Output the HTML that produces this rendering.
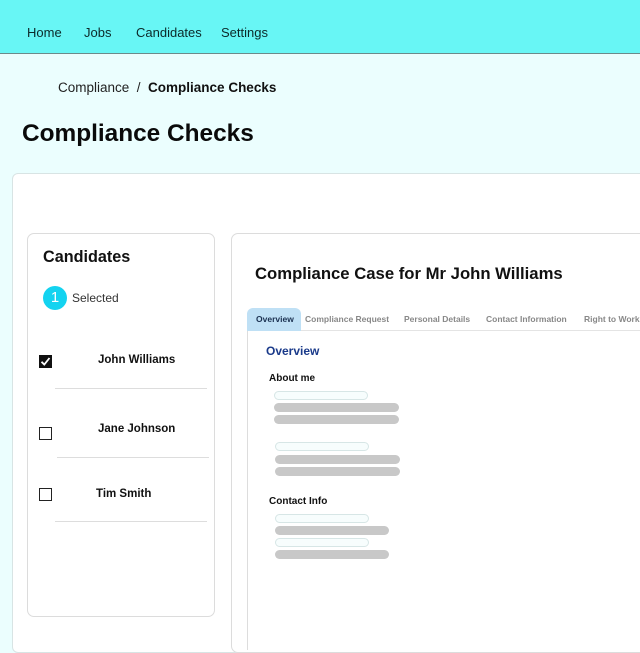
<!DOCTYPE html>
<html><head><style>
*{margin:0;padding:0;box-sizing:border-box}
body{width:640px;height:640px;overflow:hidden;background:#ebfefe;font-family:"Liberation Sans",sans-serif;position:relative;color:#111}
.a{position:absolute}
.hdr{left:0;top:0;width:640px;height:54px;background:#68f6f5;border-bottom:1px solid #6a8a8a}
.nav{top:25px;font-size:13px;color:#0c2a2a}
.card{left:12px;top:173px;width:640px;height:480px;background:#fff;border:1px solid #d8e4e4;border-radius:6px}
.lp{left:27px;top:233px;width:188px;height:384px;border:1px solid #dcdcdc;border-radius:7px;background:#fff}
.rp{left:231px;top:233px;width:420px;height:420px;border:1px solid #dcdcdc;border-radius:7px;background:#fff}
.cb{width:13px;height:13px;border:1.5px solid #222;background:#fff}
.nm{font-size:11.5px;font-weight:bold}
.hr{height:1px;background:#ddd}
.tab{top:314px;font-size:8.5px;font-weight:bold;color:#888}
.pill{height:9px;border:1px solid #d7e6e6;border-radius:5px;background:#f7fdfd}
.bar{height:9px;border-radius:5px;background:#c8c8c8}
</style></head><body>
<div class="a hdr"></div>
<div class="a nav" style="left:27px">Home</div>
<div class="a nav" style="left:84px">Jobs</div>
<div class="a nav" style="left:136px">Candidates</div>
<div class="a nav" style="left:221px">Settings</div>
<div class="a" style="left:58px;top:80px;font-size:13.5px;color:#222">Compliance &nbsp;/ &nbsp;<b style="color:#111">Compliance Checks</b></div>
<div class="a" style="left:22px;top:120px;font-size:24.4px;font-weight:bold;color:#0a0a0a">Compliance Checks</div>
<div class="a card"></div>
<div class="a lp"></div>
<div class="a" style="left:43px;top:248px;font-size:16.2px;font-weight:bold">Candidates</div>
<div class="a" style="left:43px;top:286px;width:24px;height:24px;border-radius:50%;background:#13d3f0;color:#fff;font-size:15px;text-align:center;line-height:24px">1</div>
<div class="a" style="left:72px;top:291px;font-size:12px;color:#333">Selected</div>
<div class="a" style="left:39px;top:355px;width:13px;height:13px;background:#111"><svg width="13" height="13" viewBox="0 0 13 13"><path d="M2.5 6.8 L5.3 9.5 L10.5 3" stroke="#fff" stroke-width="1.8" fill="none"/></svg></div>
<div class="a nm" style="left:98px;top:354px">John Williams</div>
<div class="a hr" style="left:55px;top:388px;width:152px"></div>
<div class="a cb" style="left:39px;top:427px"></div>
<div class="a nm" style="left:98px;top:423px">Jane Johnson</div>
<div class="a hr" style="left:57px;top:457px;width:152px"></div>
<div class="a cb" style="left:39px;top:488px"></div>
<div class="a nm" style="left:96px;top:488px">Tim Smith</div>
<div class="a hr" style="left:55px;top:521px;width:152px"></div>
<div class="a rp"></div>
<div class="a" style="left:255px;top:264px;font-size:16.7px;font-weight:bold">Compliance Case for Mr John Williams</div>
<div class="a" style="left:247px;top:330px;width:400px;height:320px;border-left:1px solid #ddd;border-top:1px solid #e4e4e4"></div>
<div class="a" style="left:247px;top:308px;width:54px;height:23px;background:#bfe0f5;border-radius:6px 6px 0 0"></div>
<div class="a tab" style="left:256px;color:#1a3050">Overview</div>
<div class="a tab" style="left:305px">Compliance Request</div>
<div class="a tab" style="left:404px">Personal Details</div>
<div class="a tab" style="left:486px">Contact Information</div>
<div class="a tab" style="left:584px">Right to Work</div>
<div class="a" style="left:266px;top:344px;font-size:12px;font-weight:bold;color:#1a3a8a">Overview</div>
<div class="a" style="left:269px;top:373px;font-size:10px;font-weight:bold">About me</div>
<div class="a pill" style="left:274px;top:391px;width:94px"></div>
<div class="a bar" style="left:274px;top:403px;width:125px"></div>
<div class="a bar" style="left:274px;top:415px;width:125px"></div>
<div class="a pill" style="left:275px;top:442px;width:94px"></div>
<div class="a bar" style="left:275px;top:455px;width:125px"></div>
<div class="a bar" style="left:275px;top:467px;width:125px"></div>
<div class="a" style="left:269px;top:496px;font-size:10px;font-weight:bold">Contact Info</div>
<div class="a pill" style="left:275px;top:514px;width:94px"></div>
<div class="a bar" style="left:275px;top:526px;width:114px"></div>
<div class="a pill" style="left:275px;top:538px;width:94px"></div>
<div class="a bar" style="left:275px;top:550px;width:114px"></div>
</body></html>
